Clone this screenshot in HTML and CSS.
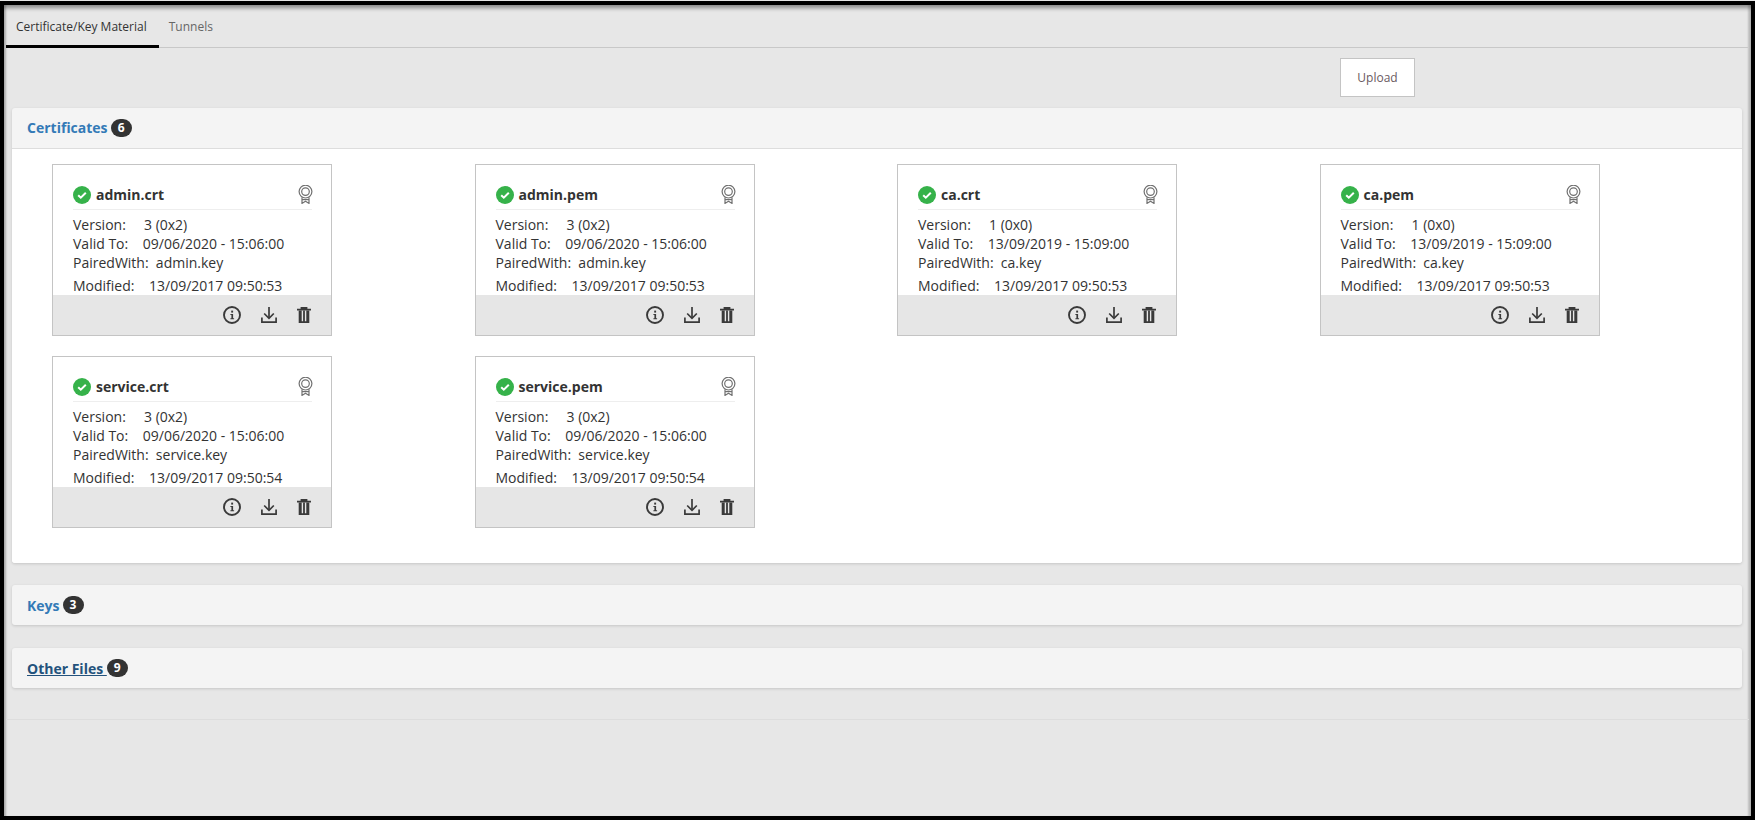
FILE: index.html
```html
<!DOCTYPE html>
<html lang="en">
<head>
  <meta charset="UTF-8">
  <title>Certificate/Key Material</title>
  <link rel="stylesheet" href="styles.css">
</head>
<body>
  <svg class="sprites" xmlns="http://www.w3.org/2000/svg">
    <symbol id="i-check" viewBox="0 0 18 18">
      <circle cx="9" cy="9" r="9" fill="#36b24a"/>
      <path d="M5.2 9.2l2.6 2.5 5-5" fill="none" stroke="#fff" stroke-width="2"/>
    </symbol>
    <symbol id="i-award" viewBox="0 0 15 19">
      <g fill="none" stroke="#707070" stroke-width="1.2">
        <circle cx="7.5" cy="6.6" r="6.4"/>
        <circle cx="7.5" cy="6.6" r="3.8"/>
        <path d="M4 12.2v6.2l3.5-2.2 3.5 2.2v-6.2"/>
        <path d="M4 14.6h7"/>
      </g>
    </symbol>
    <symbol id="i-info" viewBox="0 0 18 18">
      <circle cx="9" cy="9" r="8" fill="none" stroke="#3a3a3a" stroke-width="1.9"/>
      <path d="M7.4 8h2.7v4.2h1v1.1H7.4v-1.1h1V9.1h-1z" fill="#3a3a3a"/>
      <rect x="8.2" y="4.6" width="1.9" height="2" fill="#3a3a3a"/>
    </symbol>
    <symbol id="i-download" viewBox="0 0 16 16">
      <g fill="none" stroke="#3a3a3a" stroke-width="1.7">
        <path d="M8 0v11"/>
        <path d="M3.2 6.5L8 11.3l4.8-4.8"/>
        <path d="M.9 10.6v4.6h14.2v-4.6"/>
      </g>
    </symbol>
    <symbol id="i-trash" viewBox="0 0 14 16">
      <path d="M0 2.6h14M4.4 2.6V.9h5.2v1.7" fill="none" stroke="#3a3a3a" stroke-width="1.6"/>
      <path d="M1.7 3.4h3v10.9h1.4V3.4h1.8v10.9h1.4V3.4h3V16H1.7z" fill="#3a3a3a"/>
    </symbol>
  </svg>

  <div class="window">
    <div class="tabs">
      <a class="tab active">Certificate/Key Material</a>
      <a class="tab">Tunnels</a>
    </div>

    <div class="toolbar">
      <button class="upload">Upload</button>
    </div>

    <div class="panel open">
      <div class="panel-head"><a class="panel-link">Certificates</a> <span class="badge">6</span></div>
      <div class="panel-body">
        <div class="col">
          <div class="card">
            <div class="card-main">
              <div class="card-title"><svg class="ico-check"><use href="#i-check"/></svg><b>admin.crt</b><svg class="ico-award"><use href="#i-award"/></svg></div>
              <div class="line">Version:&nbsp;&nbsp;&nbsp;&nbsp;&nbsp;3 (0x2)</div>
              <div class="line">Valid To:&nbsp;&nbsp;&nbsp;&nbsp;09/06/2020 - 15:06:00</div>
              <div class="line">PairedWith:&nbsp;&nbsp;admin.key</div>
              <div class="line modified">Modified:&nbsp;&nbsp;&nbsp;&nbsp;13/09/2017 09:50:53</div>
            </div>
            <div class="card-foot"><svg class="ico-info"><use href="#i-info"/></svg><svg class="ico-download"><use href="#i-download"/></svg><svg class="ico-trash"><use href="#i-trash"/></svg></div>
          </div>
        </div>
        <div class="col">
          <div class="card">
            <div class="card-main">
              <div class="card-title"><svg class="ico-check"><use href="#i-check"/></svg><b>admin.pem</b><svg class="ico-award"><use href="#i-award"/></svg></div>
              <div class="line">Version:&nbsp;&nbsp;&nbsp;&nbsp;&nbsp;3 (0x2)</div>
              <div class="line">Valid To:&nbsp;&nbsp;&nbsp;&nbsp;09/06/2020 - 15:06:00</div>
              <div class="line">PairedWith:&nbsp;&nbsp;admin.key</div>
              <div class="line modified">Modified:&nbsp;&nbsp;&nbsp;&nbsp;13/09/2017 09:50:53</div>
            </div>
            <div class="card-foot"><svg class="ico-info"><use href="#i-info"/></svg><svg class="ico-download"><use href="#i-download"/></svg><svg class="ico-trash"><use href="#i-trash"/></svg></div>
          </div>
        </div>
        <div class="col">
          <div class="card">
            <div class="card-main">
              <div class="card-title"><svg class="ico-check"><use href="#i-check"/></svg><b>ca.crt</b><svg class="ico-award"><use href="#i-award"/></svg></div>
              <div class="line">Version:&nbsp;&nbsp;&nbsp;&nbsp;&nbsp;1 (0x0)</div>
              <div class="line">Valid To:&nbsp;&nbsp;&nbsp;&nbsp;13/09/2019 - 15:09:00</div>
              <div class="line">PairedWith:&nbsp;&nbsp;ca.key</div>
              <div class="line modified">Modified:&nbsp;&nbsp;&nbsp;&nbsp;13/09/2017 09:50:53</div>
            </div>
            <div class="card-foot"><svg class="ico-info"><use href="#i-info"/></svg><svg class="ico-download"><use href="#i-download"/></svg><svg class="ico-trash"><use href="#i-trash"/></svg></div>
          </div>
        </div>
        <div class="col">
          <div class="card">
            <div class="card-main">
              <div class="card-title"><svg class="ico-check"><use href="#i-check"/></svg><b>ca.pem</b><svg class="ico-award"><use href="#i-award"/></svg></div>
              <div class="line">Version:&nbsp;&nbsp;&nbsp;&nbsp;&nbsp;1 (0x0)</div>
              <div class="line">Valid To:&nbsp;&nbsp;&nbsp;&nbsp;13/09/2019 - 15:09:00</div>
              <div class="line">PairedWith:&nbsp;&nbsp;ca.key</div>
              <div class="line modified">Modified:&nbsp;&nbsp;&nbsp;&nbsp;13/09/2017 09:50:53</div>
            </div>
            <div class="card-foot"><svg class="ico-info"><use href="#i-info"/></svg><svg class="ico-download"><use href="#i-download"/></svg><svg class="ico-trash"><use href="#i-trash"/></svg></div>
          </div>
        </div>
        <div class="col">
          <div class="card">
            <div class="card-main">
              <div class="card-title"><svg class="ico-check"><use href="#i-check"/></svg><b>service.crt</b><svg class="ico-award"><use href="#i-award"/></svg></div>
              <div class="line">Version:&nbsp;&nbsp;&nbsp;&nbsp;&nbsp;3 (0x2)</div>
              <div class="line">Valid To:&nbsp;&nbsp;&nbsp;&nbsp;09/06/2020 - 15:06:00</div>
              <div class="line">PairedWith:&nbsp;&nbsp;service.key</div>
              <div class="line modified">Modified:&nbsp;&nbsp;&nbsp;&nbsp;13/09/2017 09:50:54</div>
            </div>
            <div class="card-foot"><svg class="ico-info"><use href="#i-info"/></svg><svg class="ico-download"><use href="#i-download"/></svg><svg class="ico-trash"><use href="#i-trash"/></svg></div>
          </div>
        </div>
        <div class="col">
          <div class="card">
            <div class="card-main">
              <div class="card-title"><svg class="ico-check"><use href="#i-check"/></svg><b>service.pem</b><svg class="ico-award"><use href="#i-award"/></svg></div>
              <div class="line">Version:&nbsp;&nbsp;&nbsp;&nbsp;&nbsp;3 (0x2)</div>
              <div class="line">Valid To:&nbsp;&nbsp;&nbsp;&nbsp;09/06/2020 - 15:06:00</div>
              <div class="line">PairedWith:&nbsp;&nbsp;service.key</div>
              <div class="line modified">Modified:&nbsp;&nbsp;&nbsp;&nbsp;13/09/2017 09:50:54</div>
            </div>
            <div class="card-foot"><svg class="ico-info"><use href="#i-info"/></svg><svg class="ico-download"><use href="#i-download"/></svg><svg class="ico-trash"><use href="#i-trash"/></svg></div>
          </div>
        </div>
      </div>
    </div>

    <div class="panel">
      <div class="panel-head"><a class="panel-link">Keys</a> <span class="badge">3</span></div>
    </div>

    <div class="panel">
      <div class="panel-head"><a class="panel-link hover">Other Files </a> <span class="badge">9</span></div>
    </div>

    <div class="page-rule"></div>
  </div>
</body>
</html>
```

FILE: styles.css
```css
* {
  box-sizing: border-box;
}

body {
  margin: 0;
  height: 100vh;
  overflow: hidden;
  background: #000;
  border-top: 1px solid #e6e6e6;
  font-family: "Open Sans", sans-serif;
  font-size: 14px;
  color: #333;
}

.sprites {
  display: none;
}

.window {
  height: 811px;
  margin: 4px 4px 0 4px;
  padding: 0 2px;
  background: #e7e7e7;
  box-shadow: inset 0 4px 4px -1px rgba(0,0,0,0.4), inset 3px 0 2px -1px rgba(0,0,0,0.18), inset -4px 0 2px -1px rgba(0,0,0,0.14);
}

.tabs {
  display: flex;
  height: 43px;
  margin-right: 1px;
  border-bottom: 1px solid #c8c8c8;
}

.tab {
  height: 43px;
  padding: 13px 10px 0;
  font-size: 12px;
  line-height: 18px;
  color: #666;
}

.tab.active {
  padding-right: 12px;
  color: #333;
  border-bottom: 3px solid #000;
}

.toolbar {
  display: flex;
  justify-content: flex-end;
  height: 60px;
  padding: 10px 334px 0 0;
}

.upload {
  width: 75px;
  height: 39px;
  background: #fff;
  border: 1px solid #c4c4c4;
  font-family: inherit;
  font-size: 12px;
  color: #6a5a5f;
}

.panel {
  width: 1730px;
  margin: 0 0 23px 6px;
  background: #f4f4f4;
  border-radius: 3px;
  box-shadow: 0 1px 3px rgba(0,0,0,0.15);
}

.panel.open {
  margin-bottom: 22px;
}

.panel-head {
  height: 40px;
  padding: 0 15px;
  display: flex;
  align-items: center;
  gap: 3px;
  white-space: pre;
  font-weight: 700;
}

.panel.open .panel-head {
  height: 41px;
  padding-bottom: 1px;
  border-bottom: 1px solid #ddd;
}

.panel-link {
  color: #337ab7;
}

.panel-link.hover {
  margin-right: -3px;
  color: #23527c;
  text-decoration: underline;
}

.badge {
  width: 21px;
  height: 18px;
  border-radius: 10px;
  background: #333;
  color: #fff;
  font-size: 12px;
  line-height: 18px;
  text-align: center;
}

.panel-body {
  display: grid;
  grid-template-columns: repeat(4, 422.5px);
  height: 414px;
  padding: 15px 20px 0;
  background: #fff;
  border-radius: 0 0 3px 3px;
  align-content: start;
}

.col {
  padding: 0 0 20px 20px;
}

.card {
  width: 280px;
  height: 172px;
  display: flex;
  flex-direction: column;
  background: #fff;
  border: 1px solid #c4c4c4;
}

.card-main {
  flex: 1;
  overflow: hidden;
  padding: 0 19px 0 20px;
}

.card-title {
  height: 45px;
  padding-top: 15px;
  margin-bottom: 5px;
  display: flex;
  align-items: center;
  border-bottom: 1px solid #eee;
}

.card-title b {
  flex: 1;
  margin-left: 5px;
  font-weight: 700;
}

.line {
  height: 19px;
  line-height: 19px;
  white-space: nowrap;
}

.line.modified {
  margin-top: 4px;
}

.card-foot {
  height: 40px;
  padding: 0 20px 0 0;
  display: flex;
  justify-content: flex-end;
  align-items: center;
  background: #e6e6e6;
}

.ico-check {
  width: 18px;
  height: 18px;
}

.ico-award {
  width: 15px;
  height: 19px;
  margin-right: -1px;
}

.ico-info {
  width: 18px;
  height: 18px;
}

.ico-download {
  width: 16px;
  height: 16px;
  margin-left: 20px;
}

.ico-trash {
  width: 14px;
  height: 16px;
  margin-left: 20px;
}

.page-rule {
  margin-top: 31px;
  height: 1px;
  background: #ddd;
}
```
